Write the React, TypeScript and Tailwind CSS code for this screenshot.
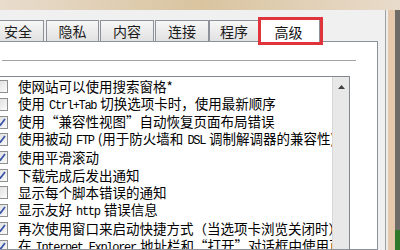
import React from "react";

const cjk = { fontFamily: '"Noto Sans CJK SC", "Noto Sans", sans-serif' };

const Lat = ({ children }: { children: React.ReactNode }) => (
  <span className="text-[12px] tracking-[-1.3px] px-[1px]" style={{ fontFamily: '"Liberation Mono", monospace' }}>
    {children}
  </span>
);

type Row = { checked: boolean; text: React.ReactNode };

const rows: Row[] = [
  { checked: false, text: <>使网站可以使用搜索窗格*</> },
  { checked: false, text: <>使用 <Lat>Ctrl+Tab</Lat> 切换选项卡时，使用最新顺序</> },
  { checked: true, text: <>使用“兼容性视图”自动恢复页面布局错误</> },
  { checked: true, text: <>使用被动 <Lat>FTP</Lat> (用于防火墙和 <Lat>DSL</Lat> 调制解调器的兼容性)</> },
  { checked: true, text: <>使用平滑滚动</> },
  { checked: true, text: <>下载完成后发出通知</> },
  { checked: false, text: <>显示每个脚本错误的通知</> },
  { checked: true, text: <>显示友好 <Lat>http</Lat> 错误信息</> },
  { checked: true, text: <>再次使用窗口来启动快捷方式（当选项卡浏览关闭时）</> },
  { checked: true, text: <>在 <Lat>Internet Explorer</Lat> 地址栏和“打开”对话框中使用直接导航</> },
];

const Tab = ({ label, w }: { label: string; w: string }) => (
  <div
    className={`${w} h-[21px] mt-[1px] flex items-center justify-center border border-b-0 border-[#8d9199] bg-gradient-to-b from-[#f7f7f7] to-[#e1e1e1] text-[14px] text-[#1c1c1c] shrink-0`}
    style={cjk}
  >
    {label}
  </div>
);

const Check = ({ on }: { on: boolean }) => (
  <div className="w-[13px] h-[13px] ml-[-5px] border border-[#8e8f8f] bg-gradient-to-br from-[#dcdcdc] to-[#fbfbfb] flex items-center justify-center shrink-0">
    {on && (
      <svg width="11" height="11" viewBox="0 0 11 11">
        <path d="M2 5.5 L4.5 8 L9 2" fill="none" stroke="#3a55a8" strokeWidth="1.8" />
      </svg>
    )}
  </div>
);

export default function App() {
  return (
    <div className="w-[400px] h-[250px] overflow-hidden flex flex-col bg-[#e4d3c2]">
      <div className="h-[10px] shrink-0 bg-gradient-to-r from-[#e8dccd] via-[#d9c49f] to-[#e9dbcb]" />
      <div className="flex-1 flex min-h-0">
        <div className="w-[386px] shrink-0 bg-[#f0f0f0] border-r border-[#a0a0a0] flex flex-col pt-[10px] min-h-0">
          <div className="flex items-end h-[21px] ml-[-8px] relative z-10">
            <Tab label="安全" w="w-[52px]" />
            <div className="w-[2px]" />
            <Tab label="隐私" w="w-[53px]" />
            <div className="w-[1px]" />
            <Tab label="内容" w="w-[54px]" />
            <div className="w-[1px]" />
            <Tab label="连接" w="w-[54px]" />
            <Tab label="程序" w="w-[50px]" />
            <div className="w-[61px] h-[23px] mb-[-1px] shrink-0 bg-white border border-b-0 border-[#8d9199] relative flex items-center justify-center text-[14px] text-[#111]" style={cjk}>
              <span className="mr-[2px] mt-[2px]">高级</span>
              <div className="absolute left-[-2px] top-[-3px] w-[65px] h-[28px] border-[3px] border-[#e0343c]" />
            </div>
          </div>
          <div className="w-[378px] flex-1 bg-white border border-[#8d9199] border-l-0 min-h-0 flex flex-col">
            <div className="h-[18px] shrink-0" />
            <div className="h-px w-[354px] bg-[#a4a4a4] ml-[2px] shrink-0" />
            <div className="h-[15px] shrink-0" />
            <div className="w-[350px] flex-1 border-t border-r border-[#828790] flex min-h-0 overflow-hidden">
              <div className="w-[332px] shrink-0 flex flex-col pt-[1px] overflow-hidden">
                {rows.map((r, i) => (
                  <div key={i} className="h-[17.7px] shrink-0 flex items-center text-[13.5px] leading-none text-black whitespace-nowrap" style={cjk}>
                    <Check on={r.checked} />
                    <span className="ml-[10px]">{r.text}</span>
                  </div>
                ))}
              </div>
              <div className="w-[17px] shrink-0 bg-[#e8e8e8] border-l border-[#d8d8d8] flex justify-center pt-[8px]">
                <svg width="7" height="4" viewBox="0 0 7 4">
                  <path d="M0 4 L3.5 0 L7 4 Z" fill="#404040" />
                </svg>
              </div>
            </div>
          </div>
        </div>
        <div className="w-[2px] shrink-0 bg-[#ececec]" />
        <div className="w-[7px] shrink-0 bg-[#e6c9ad]" />
        <div className="flex-1 flex flex-col bg-[#6e6a66]">
          <div className="flex-1" />
          <div className="h-[20px] bg-[#2f7a2a]" />
        </div>
      </div>
    </div>
  );
}
